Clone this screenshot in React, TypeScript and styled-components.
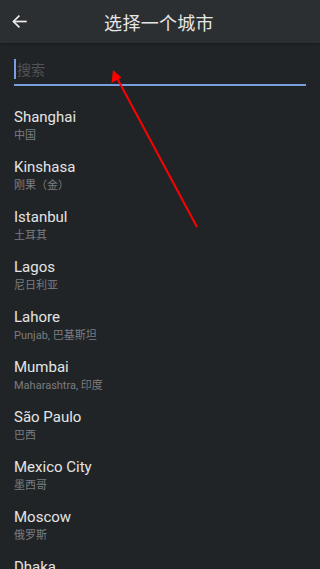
import React from "react";
import styled, { createGlobalStyle } from "styled-components";

const Global = createGlobalStyle`
  html, body { margin: 0; padding: 0; background: #212427; }
  body { font-family: Roboto, "Noto Sans CJK SC", sans-serif; overflow: hidden; }
  * { box-sizing: border-box; }
`;

const Page = styled.div`
  position: relative;
  width: 320px;
  height: 569px;
  background: #212427;
  overflow: hidden;
`;

const Header = styled.header`
  height: 43px;
  background: #2c2f32;
  display: flex;
  align-items: center;
  position: relative;
  box-shadow: 0 1px 2px rgba(0, 0, 0, 0.35);
`;

const BackButton = styled.div`
  width: 40px;
  height: 43px;
  display: flex;
  align-items: center;
  padding-left: 11px;
`;

const Title = styled.div`
  flex: 1;
  text-align: center;
  margin-right: 42px;
  color: #e6e6e6;
  font-size: 18px;
  font-family: "Noto Sans CJK SC", sans-serif;
  letter-spacing: 0.3px;
`;

const SearchWrap = styled.div`
  padding: 13px 14px 0 14px;
`;

const SearchField = styled.div`
  height: 30px;
  border-bottom: 2px solid #7a9fe0;
  display: flex;
  align-items: center;
  padding-bottom: 2px;
`;

const Caret = styled.span`
  width: 2px;
  height: 20px;
  background: #7a9fe0;
  margin-right: 1px;
`;

const Placeholder = styled.span`
  font-family: "Noto Sans CJK SC", sans-serif;
  font-size: 14px;
  color: #505356;
`;

const List = styled.div`
  margin-top: 13px;
`;

const Row = styled.div`
  height: 50px;
  padding: 8px 14px 6px;
  display: flex;
  flex-direction: column;
  gap: 2px;
`;

const Name = styled.div`
  font-size: 15px;
  line-height: 20px;
  color: #e4e4e4;
  font-family: Roboto, "Noto Sans CJK SC", sans-serif;
`;

const Sub = styled.div`
  font-size: 11px;
  line-height: 14px;
  color: #7a7d80;
  font-family: Roboto, "Noto Sans CJK SC", sans-serif;
`;

const Annotation = styled.svg`
  position: absolute;
  left: 0;
  top: 0;
  pointer-events: none;
`;

const cities: [string, string][] = [
  ["Shanghai", "中国"],
  ["Kinshasa", "刚果（金）"],
  ["Istanbul", "土耳其"],
  ["Lagos", "尼日利亚"],
  ["Lahore", "Punjab, 巴基斯坦"],
  ["Mumbai", "Maharashtra, 印度"],
  ["São Paulo", "巴西"],
  ["Mexico City", "墨西哥"],
  ["Moscow", "俄罗斯"],
  ["Dhaka", "孟加拉国"],
];

export default function App() {
  return (
    <Page>
      <Global />
      <Header>
        <BackButton>
          <svg width="17" height="17" viewBox="0 0 24 24" fill="none" stroke="#ececec" strokeWidth="2.4" strokeLinecap="square">
            <path d="M21 12H4" />
            <path d="M11 4.5L3.5 12L11 19.5" />
          </svg>
        </BackButton>
        <Title>选择一个城市</Title>
      </Header>
      <SearchWrap>
        <SearchField>
          <Caret />
          <Placeholder>搜索</Placeholder>
        </SearchField>
      </SearchWrap>
      <List>
        {cities.map(([n, s]) => (
          <Row key={n}>
            <Name>{n}</Name>
            <Sub>{s}</Sub>
          </Row>
        ))}
      </List>
      <Annotation width="320" height="569" viewBox="0 0 320 569">
        <line x1="197" y1="227" x2="117" y2="78" stroke="#ff0000" strokeWidth="2" />
        <polygon points="113,70 111.5,83 121.5,77.5" fill="#ff0000" />
      </Annotation>
    </Page>
  );
}
